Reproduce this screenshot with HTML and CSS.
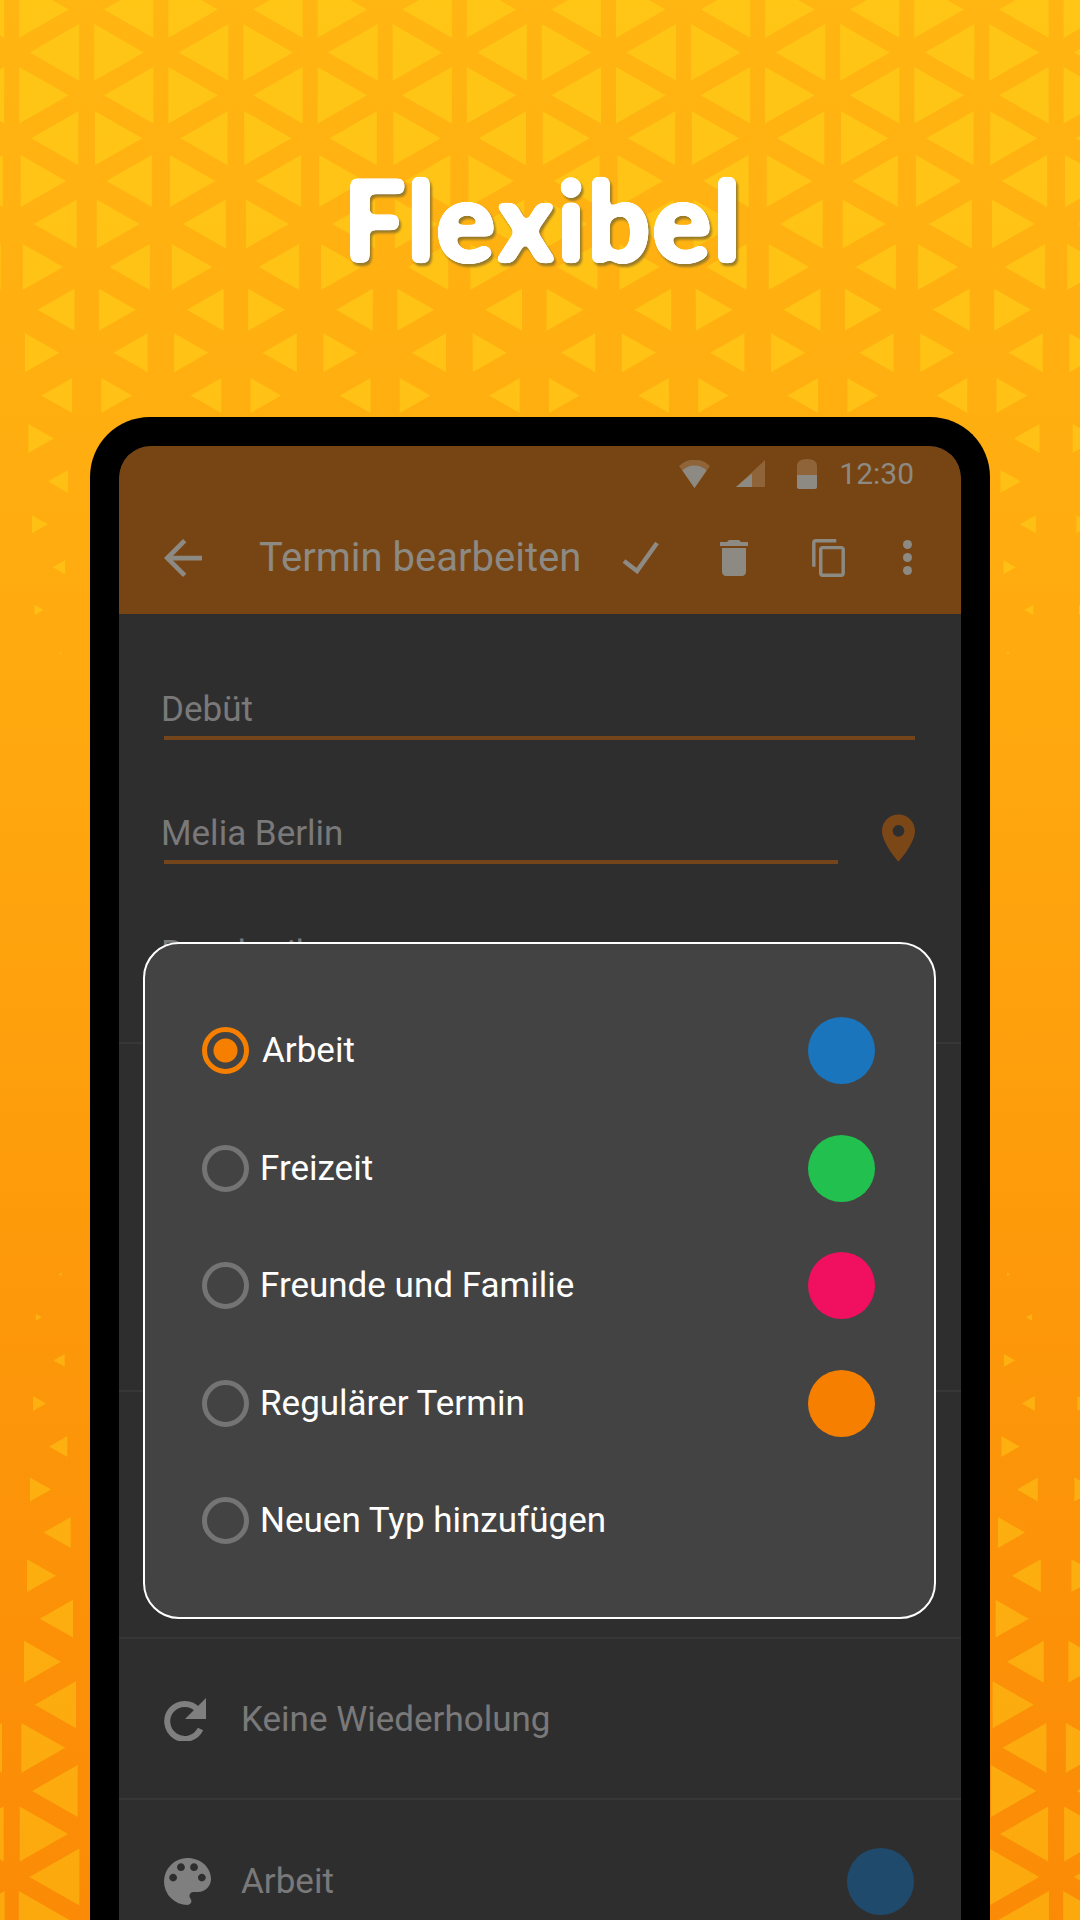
FILE: index.html

```html
<!DOCTYPE html>
<html lang="de">
<head>
  <meta charset="UTF-8">
  <title>Flexibel</title>
  <link rel="stylesheet" href="styles.css">
</head>
<body>
  <svg class="pattern" id="pattern" width="1080" height="1920" viewBox="0 0 1080 1920"></svg>

  <svg class="filter-defs" width="0" height="0">
    <filter id="rounded" x="-5%" y="-5%" width="110%" height="110%">
      <feGaussianBlur stdDeviation="3.4"/>
      <feComponentTransfer>
        <feFuncA type="linear" slope="14" intercept="-4.4"/>
      </feComponentTransfer>
    </filter>
  </svg>

  <div class="headline">
    <h1>Flexibel</h1>
  </div>

  <div class="phone">
    <div class="screen">
      <div class="appbar">
        <div class="statusbar">
          <svg class="st-wifi" width="31" height="28" viewBox="0 0 31 28">
            <path class="faded" d="M0 6A22 22 0 0 1 31 6L15.5 28Z"/>
            <path d="M3.5 10.500A17 17 0 0 1 27.500 10.500L15.500 28Z"/>
          </svg>
          <svg class="st-signal" width="29" height="27" viewBox="0 0 29 27">
            <path class="faded" d="M29 0V27H0Z"/>
            <path d="M16 13.500V27H0Z"/>
          </svg>
          <svg class="st-battery" width="20" height="30" viewBox="0 0 20 30">
            <path class="faded" d="M0 7Q0 0 10 0T20 7V16H0Z"/>
            <path d="M0 16H20V28Q20 30 18 30H2Q0 30 0 28Z"/>
          </svg>
          <span class="clock">12:30</span>
        </div>
        <div class="toolbar">
          <svg class="tb-back" width="38" height="38" viewBox="4 4 16 16"><path d="M20 11H7.830l5.590-5.590L12 4l-8 8 8 8 1.410-1.410L7.830 13H20z"/></svg>
          <span class="tb-title">Termin bearbeiten</span>
          <svg class="tb-check" width="37" height="33" viewBox="0 0 37 33"><path d="M2 20L15 30L35 2"/></svg>
          <svg class="tb-trash" width="28" height="36" viewBox="5 3 14 18"><path d="M6 19c0 1.100.900 2 2 2h8c1.100 0 2-.900 2-2V7H6zM19 4h-3.500l-1-1h-5l-1 1H5v2h14z"/></svg>
          <svg class="tb-copy" width="33" height="38" viewBox="2 1 19 22"><path d="M16 1H4c-1.100 0-2 .900-2 2v14h2V3h12zm3 4H8c-1.100 0-2 .900-2 2v14c0 1.100.900 2 2 2h11c1.100 0 2-.900 2-2V7c0-1.100-.900-2-2-2zm0 16H8V7h11z"/></svg>
          <svg class="tb-more" width="9" height="35" viewBox="0 0 9 35"><circle cx="4.500" cy="4.500" r="4.500"/><circle cx="4.500" cy="17.500" r="4.500"/><circle cx="4.500" cy="30.500" r="4.500"/></svg>
        </div>
      </div>

      <div class="section form">
        <div class="field">Debüt</div>
        <div class="field-row">
          <div class="field short">Melia Berlin</div>
          <svg class="pin" width="33" height="48" viewBox="5 2 14 20"><path fill-rule="evenodd" d="M12 2C8.130 2 5 5.130 5 9c0 5.250 7 13 7 13s7-7.750 7-13c0-3.870-3.130-7-7-7zm0 9.500a2.500 2.500 0 0 1 0-5 2.500 2.500 0 0 1 0 5z"/></svg>
        </div>
        <div class="field plain">Beschreibung</div>
      </div>
      <div class="section dates"></div>
      <div class="section alarms"></div>
      <div class="section row repeat">
        <svg class="row-icon" width="42" height="43" viewBox="0 0 42 43">
          <path class="arc" d="M34 12A17.500 17.500 0 1 0 36.500 31"/>
          <path d="M42 0V21H21Z"/>
        </svg>
        <span class="row-text">Keine Wiederholung</span>
      </div>
      <div class="section row kind">
        <svg class="row-icon" width="47" height="47" viewBox="3 3 18 18"><path d="M12 3a9 9 0 0 0 0 18c.830 0 1.500-.670 1.500-1.500 0-.390-.150-.740-.390-1.010-.230-.260-.380-.610-.380-.990 0-.830.670-1.500 1.500-1.500H16c2.760 0 5-2.240 5-5 0-4.420-4.030-8-9-8zm-5.500 9c-.830 0-1.500-.670-1.500-1.500S5.670 9 6.500 9 8 9.670 8 10.500 7.330 12 6.500 12zm3-4C8.670 8 8 7.330 8 6.500S8.670 5 9.500 5s1.500.670 1.500 1.500S10.330 8 9.500 8zm5 0c-.830 0-1.500-.670-1.500-1.500S13.670 5 14.500 5s1.500.670 1.500 1.500S15.330 8 14.500 8zm3 4c-.830 0-1.500-.670-1.500-1.500S16.670 9 17.500 9s1.500.670 1.500 1.500-.670 1.500-1.500 1.500z"/></svg>
        <span class="row-text">Arbeit</span>
        <span class="swatch dim-blue"></span>
      </div>

      <div class="dialog">
        <div class="option selected"><span class="radio"></span><span class="option-text">Arbeit</span><span class="swatch blue"></span></div>
        <div class="option"><span class="radio"></span><span class="option-text">Freizeit</span><span class="swatch green"></span></div>
        <div class="option"><span class="radio"></span><span class="option-text">Freunde und Familie</span><span class="swatch pink"></span></div>
        <div class="option"><span class="radio"></span><span class="option-text">Regulärer Termin</span><span class="swatch orange"></span></div>
        <div class="option"><span class="radio"></span><span class="option-text">Neuen Typ hinzufügen</span></div>
      </div>
    </div>
  </div>

  <script src="pattern.js"></script>
</body>
</html>
```

FILE: styles.css

```css
* { box-sizing: border-box; }
html, body { margin: 0; padding: 0; }
body {
  position: relative;
  width: 1080px;
  height: 1920px;
  overflow: hidden;
  font-family: Roboto, "Noto Sans", sans-serif;
  background: linear-gradient(180deg, #ffb512 0%, #ffaa0f 35%, #fd980a 68%, #fb8b06 100%);
}

.pattern { position: absolute; top: 0; left: 0; }
.pattern polygon { fill: #ffee20; fill-opacity: .3; }
.filter-defs { position: absolute; }

.headline {
  position: relative;
  height: 417px;
  padding: 156px 0 0 5px;
  text-align: center;
}
h1 {
  margin: 0;
  font-family: Lato, "Open Sans", sans-serif;
  font-size: 112px;
  font-weight: 900;
  line-height: 126px;
  letter-spacing: 1px;
  color: #fff;
  filter: url(#rounded) drop-shadow(2px 3px 1px rgba(70, 45, 5, .9));
}

.phone {
  position: relative;
  width: 900px;
  height: 1503px;
  margin: 0 auto;
  border: 29px solid #000;
  border-bottom: 0;
  border-radius: 60px 60px 0 0;
  background: #000;
  overflow: hidden;
}
.screen {
  position: relative;
  height: 100%;
  border-radius: 32px 32px 0 0;
  background: #2f2e2f;
  overflow: hidden;
}

.appbar { height: 168px; background: #774513; }
.appbar svg { display: block; fill: #8d8983; }
.appbar .faded { fill: #8f6439; }
.statusbar {
  display: flex;
  align-items: center;
  justify-content: flex-end;
  height: 55px;
  padding-right: 47px;
}
.st-wifi { margin-right: 26px; }
.st-signal { margin-right: 32px; }
.st-battery { margin-right: 22px; }
.clock { font-size: 30px; color: #8d8983; }

.toolbar {
  display: flex;
  align-items: center;
  height: 113px;
  padding-left: 45px;
}
.tb-back { margin-right: 57px; }
.tb-title { width: 363px; font-size: 40px; color: #8d8983; white-space: nowrap; }
.appbar .tb-check { margin-right: 61px; fill: none; stroke: #8d8983; stroke-width: 4.500; }
.tb-trash { margin-right: 64px; }
.tb-copy { margin-right: 58px; }

.section { border-bottom: 2px solid #383738; }
.form { height: 430px; padding: 76px 46px 0 45px; }
.dates { height: 348px; }
.alarms { height: 247px; }

.field {
  height: 50px;
  padding-bottom: 6px;
  border-bottom: 4px solid #74451a;
  font-size: 35px;
  line-height: 40px;
  color: #7a797a;
  text-indent: -3px;
}
.field-row {
  display: flex;
  align-items: flex-start;
  justify-content: space-between;
  margin-top: 74px;
}
.field.short { width: 674px; }
.pin { fill: #7b4717; }
.field.plain { margin-top: 70px; border-bottom: 0; }

.row { display: flex; align-items: center; padding: 0 47px 0 45px; }
.row-icon { flex: none; fill: #7f7f7f; }
.row-icon .arc { fill: none; stroke: #7f7f7f; stroke-width: 6; }
.row-text { font-size: 35px; color: #7a797a; }
.repeat { height: 161px; padding-top: 1px; }
.repeat .row-text { margin-left: 35px; }
.kind { height: 162px; border-bottom: 0; }
.kind .row-text { margin-left: 30px; }
.kind .swatch { margin-left: auto; }

.swatch { flex: none; width: 67px; height: 67px; border-radius: 50%; }
.blue { background: #1b75bc; }
.green { background: #22c04f; }
.pink { background: #f0105f; }
.orange { background: #f77f00; }
.dim-blue { background: #1f4a6c; }

.dialog {
  position: absolute;
  top: 496px;
  left: 24px;
  width: 793px;
  height: 677px;
  padding: 48px 59px 0 57px;
  border: 2px solid #fff;
  border-radius: 36px;
  background: #434343;
}
.option { display: flex; align-items: center; height: 117.500px; }
.radio {
  flex: none;
  width: 47px;
  height: 47px;
  margin-right: 11px;
  border: 5px solid #747474;
  border-radius: 50%;
}
.option-text { flex: 1; font-size: 35px; color: #fff; }
.selected .radio {
  margin-right: 13px;
  border-color: #f77f00;
  background: radial-gradient(circle, #f77f00 0 11.500px, transparent 12.500px);
}
```

FILE: pattern.js

```js
// triangles get smaller towards the middle of the page, [y, triangle height]
var topSizes = [[0, 56.5], [100, 56.5], [137, 54], [181, 52], [224, 49], [267, 46], [310, 42], [353, 39], [396, 35],
  [439, 29], [482, 23], [525, 18], [567, 14], [611, 10], [653, 3], [670, 0]];
var bottomSizes = [[1250, 0], [1276, 4], [1318, 7], [1362, 13], [1404, 15], [1448, 21], [1490, 24], [1533, 31],
  [1577, 33], [1620, 38], [1662, 42], [1705, 47], [1748, 50], [1792, 52], [1834, 55], [1877, 57], [1930, 58]];

function sizeAt(table, y) {
  for (var i = 1; i < table.length; i++) {
    if (y <= table[i][0]) {
      var a = table[i - 1], b = table[i];
      return a[1] + (b[1] - a[1]) * (y - a[0]) / (b[0] - a[0]);
    }
  }
  return table[table.length - 1][1];
}

var out = "";

function triangle(cx, y, h, dir) {
  var w = h * 0.876;
  var base = cx - dir * w * 0.38;
  var tip = base + dir * w;
  out += '<polygon points="' + base.toFixed(1) + "," + (y - h / 2).toFixed(1) + " " + tip.toFixed(1) + "," + y.toFixed(1) +
    " " + base.toFixed(1) + "," + (y + h / 2).toFixed(1) + '"/>';
}

function row(y, h, odd) {
  for (var band = odd ? 86.7 - 149.2 : 11.7 - 149.2; band < 1200; band += 149.2) {
    triangle(band - 26.3, y, h, -1);
    triangle(band + 26.3, y, h, 1);
  }
}

var i, y;
for (i = 0; i < 16; i++) {
  y = 9.5 + 42.9 * i;
  row(y, sizeAt(topSizes, y), i % 2 == 1);
}
for (i = -1; i < 15; i++) {
  y = 1877 - 43.05 * i;
  row(y, sizeAt(bottomSizes, y), (i + 2) % 2 == 0);
}

document.getElementById("pattern").innerHTML = out;
```
